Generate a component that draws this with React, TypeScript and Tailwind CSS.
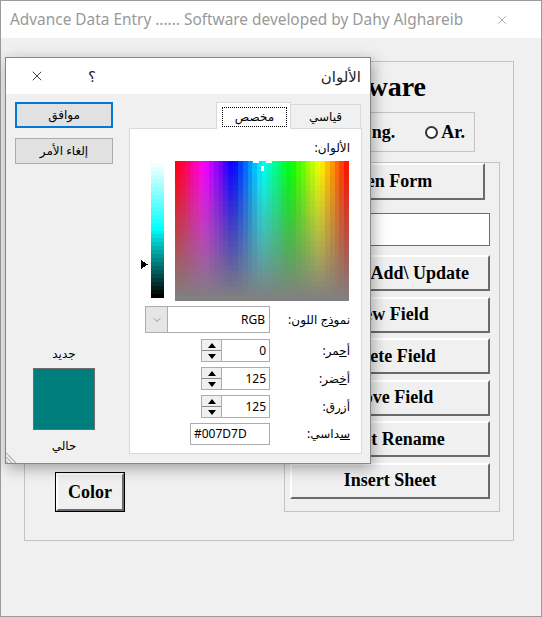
import { X, ChevronDown } from "lucide-react";

const SPEC_COLS = 36;
const SPEC_ROWS = 28;
const SPEC_W = 174;
const SPEC_H = 140;
const LUM_ROWS = 34;

function Spectrum() {
  const cw = SPEC_W / SPEC_COLS;
  const rh = SPEC_H / SPEC_ROWS;
  const lh = 135 / LUM_ROWS;
  const cells = [];
  for (let r = 0; r < SPEC_ROWS; r++) {
    const sat = 100 - (r / (SPEC_ROWS - 1)) * 100;
    for (let c = 0; c < SPEC_COLS; c++) {
      const hue = 360 - ((c + 0.5) / SPEC_COLS) * 360;
      cells.push(
        <rect
          key={`s${r}-${c}`}
          x={34 + c * cw}
          y={r * rh}
          width={cw + 0.4}
          height={rh + 0.4}
          fill={`hsl(${hue} ${sat}% 50%)`}
        />
      );
    }
  }
  const lum = [];
  for (let i = 0; i < LUM_ROWS; i++) {
    const l = 97 - (i / (LUM_ROWS - 1)) * 97;
    lum.push(
      <rect key={`l${i}`} x={10} y={2 + i * lh} width={13} height={lh + 0.4} fill={`hsl(180 100% ${l}%)`} />
    );
  }
  return (
    <svg width="208" height="140" viewBox="0 0 208 140" shapeRendering="crispEdges" className="ml-[11px] block">
      {cells}
      {lum}
      <polygon points="0,99 7,103.5 0,108" fill="#000" />
      {/* marker */}
      <rect x="112" y="0" width="6" height="2" fill="#fff" />
      <rect x="125" y="0" width="6" height="2" fill="#fff" />
      <rect x="120" y="5" width="3" height="5" fill="#fff" />
    </svg>
  );
}

function SpinButtons() {
  return (
    <div className="w-[20px] h-full flex flex-col border-r border-[#acacac] bg-[#f0f0f0]">
      <div className="flex-1 flex items-center justify-center border-b border-[#8a8a8a]">
        <svg width="8" height="5" viewBox="0 0 8 5">
          <polygon points="0,5 4,0 8,5" fill="#000" />
        </svg>
      </div>
      <div className="flex-1 flex items-center justify-center">
        <svg width="8" height="5" viewBox="0 0 8 5">
          <polygon points="0,0 8,0 4,5" fill="#000" />
        </svg>
      </div>
    </div>
  );
}

function Spinner({ value }: { value: string }) {
  return (
    <div className="h-[23px] w-[69px] flex items-stretch border border-[#acacac] bg-white">
      <SpinButtons />
      <div className="flex-1 flex items-center justify-end pr-[3px] text-[12px] text-black">{value}</div>
    </div>
  );
}

function FieldRow({ children, label, h }: { children: React.ReactNode; label: React.ReactNode; h: string }) {
  return (
    <div className={`flex items-center ${h}`}>
      <div className="w-[130px] flex justify-end">{children}</div>
      <div dir="rtl" className="w-[80px] text-right text-[12px] text-black whitespace-nowrap">
        {label}
      </div>
    </div>
  );
}

function FormButton({ label, w = "w-[200px]" }: { label: string; w?: string }) {
  return (
    <div
      className={`${w} h-[36px] shrink-0 flex items-center justify-center bg-[#f0f0f0] border-2 border-t-white border-l-white border-r-[#6b6b6b] border-b-[#6b6b6b] text-[18px] font-bold text-black whitespace-nowrap`}
    >
      {label}
    </div>
  );
}

function ColorDialog() {
  return (
    <div className="absolute left-[4px] top-[56px] w-[366px] h-[407px] flex flex-col border border-[#888] bg-[#f0f0f0] shadow-[2px_4px_14px_rgba(0,0,0,0.35)] font-['Noto_Sans','DejaVu_Sans',sans-serif]">
      {/* title bar */}
      <div className="h-[36px] shrink-0 bg-white flex items-center pl-[23px] pr-[9px]">
        <X size={16} strokeWidth={1.1} className="text-black" />
        <span className="ml-[43px] text-[15px] text-[#222]">؟</span>
        <span dir="rtl" className="ml-auto text-[15px] text-[#222]">
          الألوان
        </span>
      </div>

      {/* body */}
      <div className="relative flex-1 flex pl-[9px] pr-[8px] pt-[8px] pb-[9px]">
        {/* left column */}
        <div className="w-[98px] flex flex-col">
          <div className="h-[26px] flex items-center justify-center border-2 border-[#0078d7] bg-[#e1e1e1] text-[12px] text-black">
            موافق
          </div>
          <div className="mt-[10px] h-[26px] flex items-center justify-center border border-[#adadad] bg-[#e1e1e1] text-[12px] text-black">
            إلغاء الأمر
          </div>
          <div className="mt-auto flex flex-col items-center">
            <span className="h-[16px] leading-[16px] text-[12px] text-black">جديد</span>
            <div className="mt-[6px] w-[62px] h-[62px] border border-[#6d6d6d] bg-[#007d7d]" />
            <span className="mt-[8px] h-[16px] leading-[16px] text-[12px] text-black">حالي</span>
          </div>
        </div>

        {/* tab control */}
        <div className="ml-[16px] w-[233px] flex flex-col">
          <div className="h-[26px] flex items-end justify-end pr-[1px]">
            <div className="relative z-10 -mb-px h-[27px] w-[75px] border border-b-0 border-[#d9d9d9] bg-white pl-[5px] pr-[3px] pt-[4px]">
              <div className="h-[20px] border border-dotted border-black flex items-center justify-center text-[12px] text-black">
                مخصص
              </div>
            </div>
            <div className="h-[24px] w-[70px] border-t border-r border-[#d9d9d9] flex items-center justify-center text-[12px] text-black">
              قياسي
            </div>
          </div>
          <div className="flex-1 border border-[#d9d9d9] bg-white flex flex-col">
            <div dir="rtl" className="pt-[11px] pr-[11px] h-[27px] leading-[16px] text-[12px] text-black text-right">
              الألوان:
            </div>
            <div className="mt-[5px]">
              <Spectrum />
            </div>
            <div className="mt-[5px] flex flex-col gap-[5px] pl-[10px]">
              <FieldRow
                h="h-[27px]"
                label={
                  <>
                    نمو<span className="underline">ذ</span>ج اللون:
                  </>
                }
              >
                <div className="w-[125px] h-[27px] flex items-stretch border border-[#acacac] bg-white">
                  <div className="w-[22px] flex items-center justify-center bg-[#e5e5e5] border-r border-[#acacac]">
                    <ChevronDown size={12} strokeWidth={1} className="text-[#444]" />
                  </div>
                  <div className="flex-1 flex items-center justify-end pr-[4px] text-[12px] text-black">RGB</div>
                </div>
              </FieldRow>
              <FieldRow
                h="h-[23px] mt-[1px]"
                label={
                  <>
                    أ<span className="underline">ح</span>مر:
                  </>
                }
              >
                <Spinner value="0" />
              </FieldRow>
              <FieldRow
                h="h-[23px]"
                label={
                  <>
                    أ<span className="underline">خ</span>ضر:
                  </>
                }
              >
                <Spinner value="125" />
              </FieldRow>
              <FieldRow
                h="h-[23px]"
                label={
                  <>
                    أ<span className="underline">ز</span>رق:
                  </>
                }
              >
                <Spinner value="125" />
              </FieldRow>
              <FieldRow
                h="h-[22px]"
                label={
                  <>
                    <span className="underline">س</span>داسي:
                  </>
                }
              >
                <div className="w-[80px] h-[22px] flex items-center pl-[3px] border border-[#acacac] bg-white text-[12px] text-black">
                  #007D7D
                </div>
              </FieldRow>
            </div>
          </div>
        </div>

        {/* resize grip */}
        <svg className="absolute left-0 bottom-0" width="12" height="12" viewBox="0 0 12 12">
          <line x1="0" y1="2" x2="10" y2="12" stroke="#b5b5b5" strokeWidth="1.2" />
          <line x1="0" y1="6" x2="6" y2="12" stroke="#b5b5b5" strokeWidth="1.2" />
          <line x1="0" y1="10" x2="2" y2="12" stroke="#b5b5b5" strokeWidth="1.2" />
        </svg>
      </div>
    </div>
  );
}

export default function App() {
  return (
    <div className="relative w-[542px] h-[617px] flex flex-col border border-[#9b9b9b] bg-[#f0f0f0]">
      {/* window title bar */}
      <div className="h-[37px] shrink-0 bg-white flex items-center pl-[9px] pr-[32px] font-['Noto_Sans','DejaVu_Sans',sans-serif]">
        <span className="text-[15.4px] text-[#999] whitespace-nowrap">Advance Data Entry ...... Software developed by Dahy Alghareib</span>
        <X size={14} strokeWidth={1} className="ml-auto text-[#777]" />
      </div>

      {/* form body */}
      <div className="flex-1 pt-[23px] pl-[23px] pr-[27px] pb-[75px] font-['Liberation_Serif','Times_New_Roman',serif] text-black">
        <div className="h-full flex border border-[#c3c3c3]">
          <div className="flex-1 flex flex-col justify-end pl-[30px] pb-[28px]">
            <div className="w-[70px] h-[40px] border border-black">
              <div className="w-full h-full flex items-center justify-center border-2 border-t-white border-l-white border-r-[#6b6b6b] border-b-[#6b6b6b] text-[18px] font-bold">
                Color
              </div>
            </div>
          </div>

          <div className="w-[216px] mr-[13px] flex flex-col">
            <div className="h-[50px] flex items-center justify-end pr-[74px] text-[28px] font-bold whitespace-nowrap">
              Software
            </div>
            <div className="h-[40px] ml-[10px] mr-[25px] border border-[#c3c3c3] flex items-center justify-end pr-[9px] text-[18px] font-bold whitespace-nowrap">
              <span className="w-[13px] h-[13px] rounded-full border-2 border-[#333] bg-white" />
              <span className="ml-[3px]">Eng.</span>
              <span className="ml-[30px] w-[13px] h-[13px] rounded-full border-2 border-[#333] bg-white" />
              <span className="ml-[3px]">Ar.</span>
            </div>
            <div className="mt-[10px] h-[350px] border border-[#c3c3c3] pl-[5px] flex flex-col">
              <div className="h-[37px] w-[195px] flex items-center justify-center bg-[#f0f0f0] border-2 border-t-white border-l-white border-r-[#6b6b6b] border-b-[#6b6b6b] text-[18px] font-bold whitespace-nowrap">
                Open Form
              </div>
              <div className="mt-[13px] h-[33px] w-[200px] border border-[#6d6d6d] bg-white" />
              <div className="mt-[9px] flex flex-col gap-[5.6px]">
                <FormButton label="Record Add\ Update" />
                <FormButton label="New Field" />
                <FormButton label="Delete Field" />
                <FormButton label="Move Field" />
                <FormButton label="Sheet Rename" />
                <FormButton label="Insert Sheet" />
              </div>
            </div>
          </div>
        </div>
      </div>

      <ColorDialog />
    </div>
  );
}
